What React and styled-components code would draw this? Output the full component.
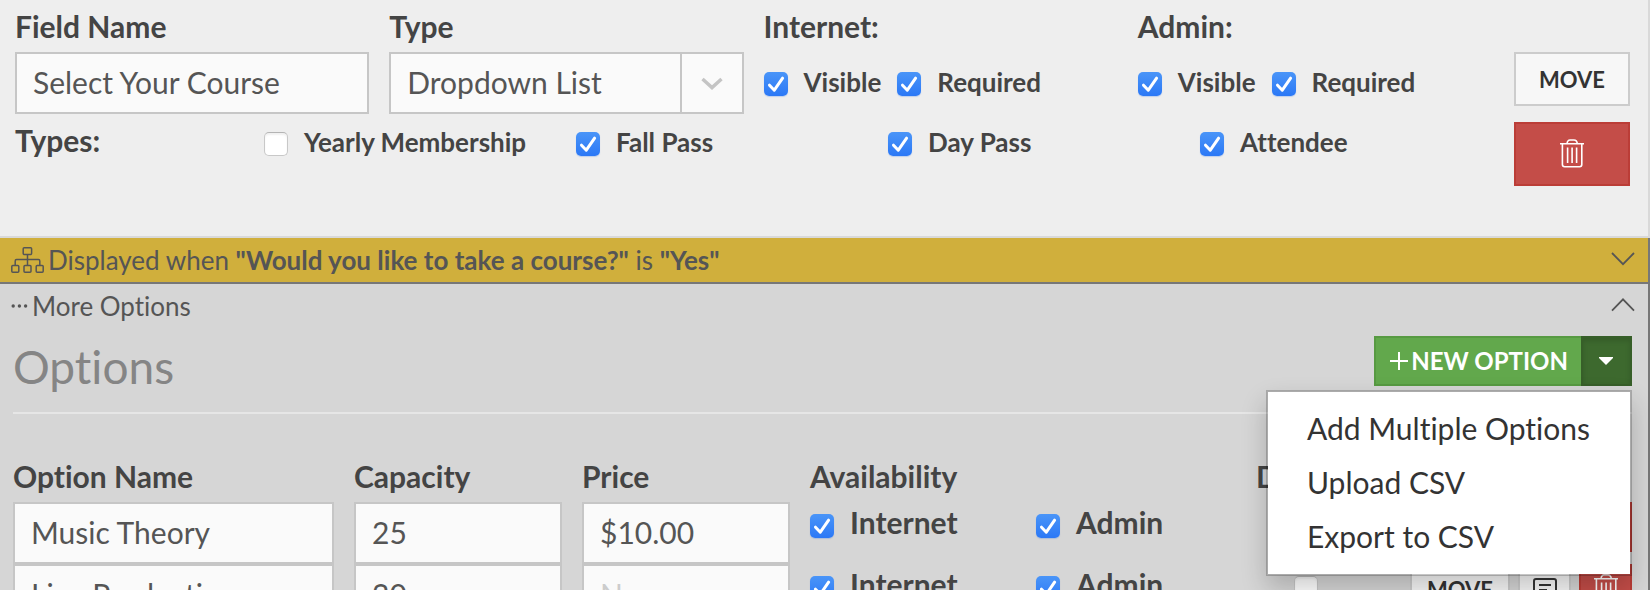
import React from "react";
import styled, { createGlobalStyle, css } from "styled-components";

const GlobalStyle = createGlobalStyle`
  *, *::before, *::after { box-sizing: border-box; }
  body {
    margin: 0;
    overflow: hidden;
    background: #d6d6d6;
    color: #444;
    font-family: Lato, "Liberation Sans", sans-serif;
    font-size: 30px;
    line-height: 36px;
    font-variant-ligatures: none;
  }
  button, input, select { font-family: inherit; font-variant-ligatures: inherit; margin: 0; }
`;

const Page = styled.main`
  height: 100vh;
  overflow: hidden;
`;

const FieldPanel = styled.section`
  display: flex;
  gap: 22px;
  padding: 0 18px 50px 15px;
  background: #eee;
  border-right: 2px solid #d9d9d9;
  border-bottom: 2px solid #d9d9d9;
`;

const FieldSettings = styled.div`
  flex: 1;
  min-width: 0;
`;

const SettingsGrid = styled.div`
  display: grid;
  grid-template-columns: repeat(4, 1fr);
  gap: 20px;
`;

const headingText = css`
  display: block;
  padding: 8px 0;
  font-size: 30px;
  font-weight: 700;
  line-height: 36px;
  text-align: left;
`;

const FieldLabel = styled.label`
  ${headingText}
`;

const Group = styled.div`
  min-width: 0;
`;

const GroupTitle = styled.div`
  ${headingText}
`;

const controlBox = css`
  display: block;
  width: 100%;
  height: 62px;
  border: 2px solid #c6c6c6;
  border-radius: 0;
  background: #fafafa;
  color: #555;
  font-size: 30px;
  line-height: 36px;
  outline: none;
`;

const TextInput = styled.input`
  ${controlBox}
  padding: 0 16px 2px;
  &::placeholder { color: #ccc; opacity: 1; }
`;

const SelectWrap = styled.div`
  position: relative;
`;

const Select = styled.select`
  ${controlBox}
  appearance: none;
  padding: 0 64px 2px 16px;
`;

const SelectArrow = styled.span`
  position: absolute;
  inset: 2px 2px 2px auto;
  width: 62px;
  display: flex;
  align-items: center;
  justify-content: center;
  border-left: 2px solid #c6c6c6;
  color: #c4c4c4;
  pointer-events: none;
`;

const CheckRow = styled.div`
  display: flex;
  gap: 16px;
  padding-top: 14px;
`;

const CheckLabel = styled.label`
  display: flex;
  align-items: flex-start;
  gap: 16px;
  font-size: ${(p) => (p.$large ? "30px" : "26px")};
  line-height: ${(p) => (p.$large ? "36px" : "32px")};
  font-weight: 700;
  white-space: nowrap;
  --box-top: ${(p) => (p.$large ? "10px" : "6px")};
`;

const Box = styled.span`
  display: grid;
  flex: none;
  width: 24px;
  height: 24px;
  margin-top: var(--box-top, 0);
  > * { grid-area: 1 / 1; }
  svg { display: none; pointer-events: none; }
  input:checked + svg { display: block; }
`;

const BoxInput = styled.input`
  appearance: none;
  width: 24px;
  height: 24px;
  border: 1px solid #c8c8c8;
  border-top-color: #b4b4b4;
  border-radius: 5px;
  background: #fff;
  box-shadow: inset 0 2px 2px rgba(0, 0, 0, 0.06);
  &:checked {
    border: 0;
    background: linear-gradient(#4a95f8, #2b78f6);
    box-shadow: 0 1px 1px rgba(40, 110, 230, 0.25);
  }
`;

const TypesGrid = styled.div`
  display: grid;
  grid-template-columns: 229px repeat(4, 1fr);
  gap: 20px;
  padding-top: 8px;
`;

const TypesTitle = styled.div`
  font-weight: 700;
`;

const TypeCell = styled.div`
  padding-top: 4px;
`;

const FieldActions = styled.div`
  display: flex;
  flex-direction: column;
  gap: 16px;
  width: 116px;
  padding-top: 52px;
`;

const tones = {
  plain: css`background: #f7f7f7; border-color: #ccc; color: #333; padding-top: 2px;`,
  danger: css`background: #c44d48; border-color: #bb3d37; color: #fff; padding-bottom: 2px;`,
};

const Button = styled.button`
  display: flex;
  align-items: center;
  justify-content: center;
  height: ${(p) => p.$height}px;
  padding: 0;
  border: 2px solid;
  font-size: 22px;
  line-height: 28px;
  font-weight: 700;
  ${(p) => tones[p.$tone || "plain"]}
`;

const Lower = styled.div`
  border-right: 2px solid #777;
`;

const Bar = styled.button`
  display: flex;
  align-items: center;
  width: 100%;
  height: 44px;
  padding: 0 13px 0 11px;
  border: 0;
  background: transparent;
  color: #555;
  font-size: 26px;
  line-height: 32px;
  text-align: left;
  > svg:last-child { margin-bottom: 2px; }
`;

const ConditionBar = styled(Bar)`
  height: 46px;
  border-bottom: 2px solid #777;
  background: #d0af3c;
`;

const BarText = styled.span`
  flex: 1;
  padding-left: 3px;
`;

const OptionsHeader = styled.header`
  display: flex;
  justify-content: space-between;
  align-items: flex-start;
  margin: 0 16px 0 13px;
  padding: 8px 0 17px;
  border-bottom: 2px solid #e6e6e6;
`;

const Title = styled.h2`
  margin: 0;
  padding-top: 3px;
  color: #858585;
  font-size: 46px;
  font-weight: 400;
  line-height: 56px;
`;

const SplitButton = styled.div`
  position: relative;
  display: flex;
`;

const NewOption = styled.button`
  display: flex;
  align-items: center;
  gap: 2px;
  height: 50px;
  padding: 0 13px;
  border: 2px solid #579a42;
  border-right: 0;
  background: #62a84c;
  color: #fff;
  font-size: 24px;
  font-weight: 700;
  line-height: 30px;
  white-space: nowrap;
`;

const Toggle = styled.button`
  display: flex;
  align-items: center;
  justify-content: center;
  width: 51px;
  height: 50px;
  padding: 0 2px 0 0;
  border: 2px solid #375f29;
  background: #3d692e;
  box-shadow: inset 0 3px 5px rgba(0, 0, 0, 0.125);
  color: #fff;
`;

const Menu = styled.ul`
  position: absolute;
  z-index: 2;
  top: 54px;
  right: 0;
  width: 366px;
  margin: 0;
  padding: 10px 0;
  border: 2px solid rgba(0, 0, 0, 0.2);
  background: #fff;
  background-clip: padding-box;
  box-shadow: 0 12px 24px rgba(0, 0, 0, 0.2);
  list-style: none;
`;

const MenuLink = styled.a`
  display: block;
  padding: 8px 39px 10px;
  color: #333;
  text-decoration: none;
  white-space: nowrap;
`;

const OptionsTable = styled.table`
  display: block;
  padding: 36px 16px 0 13px;
  thead, tbody { display: block; }
  th, td { display: block; min-width: 0; padding: 0; }
`;

const OptionRow = styled.tr`
  display: grid;
  grid-template-columns: 321fr 208fr 208fr 426fr 376fr;
  column-gap: 20px;
`;

const HeadCell = styled.th`
  && { ${headingText} }
`;

const Availability = styled.div`
  display: grid;
  grid-template-columns: 226px 1fr;
  padding-top: 2px;
`;

const RowEnd = styled.div`
  display: flex;
  justify-content: space-between;
  padding-left: 38px;
`;

const DefaultBox = styled.div`
  padding-top: 12px;
`;

const RowActions = styled.div`
  display: grid;
  grid-template-columns: 100px 53px 53px;
  gap: 8px;
`;

function Check({ checked }) {
  return (
    <>
      <BoxInput type="checkbox" defaultChecked={checked} />
      <svg width="24" height="24" viewBox="0 0 24 24" fill="none" stroke="#fff" strokeWidth="3" strokeLinecap="round" strokeLinejoin="round">
        <path d="M5.5 13.2 10.3 18.2 18.6 6.2" />
      </svg>
    </>
  );
}

function Checkbox({ label, checked = true, large }) {
  return (
    <CheckLabel $large={large}>
      <Box><Check checked={checked} /></Box>
      {label}
    </CheckLabel>
  );
}

function TrashIcon() {
  return (
    <svg width="26" height="30" viewBox="0 0 26 30" fill="none" stroke="currentColor" strokeWidth="1.6" aria-hidden="true">
      <path d="M1 5.8H25M3.4 5.8V26.6Q3.4 28.8 5.6 28.8H20.6Q22.8 28.8 22.8 26.6V5.8M8 5.8Q8.4 2 11 2H15Q17.8 2 18.4 5.8M8.6 9.5V25M13.1 9.5V25M17.6 9.5V25" />
    </svg>
  );
}

function NoteIcon() {
  return (
    <svg width="26" height="26" viewBox="0 0 26 26" fill="none" stroke="currentColor" strokeWidth="2" aria-hidden="true">
      <path d="M4 2H22Q24 2 24 4V18Q24 20 22 20H15L11 24V20H4Q2 20 2 18V4Q2 2 4 2ZM7 8H19M7 13H15" />
    </svg>
  );
}

function TreeIcon() {
  return (
    <svg width="34" height="26" viewBox="0 0 34 26" fill="none" stroke="currentColor" strokeWidth="1.5" aria-hidden="true">
      <rect x="12.2" y="0.8" width="8.4" height="6.8" rx="1" />
      <rect x="0.8" y="18.4" width="7" height="6.8" rx="1" />
      <rect x="13" y="18.4" width="7" height="6.8" rx="1" />
      <rect x="25.2" y="18.4" width="7" height="6.8" rx="1" />
      <path d="M16.5 7.6V18.4M4.2 18.4V14Q4.2 12.6 5.6 12.6H27.4Q28.8 12.6 28.8 14V18.4" />
    </svg>
  );
}

function DotsIcon() {
  return (
    <svg width="18" height="6" viewBox="0 0 18 6" fill="currentColor" aria-hidden="true">
      <circle cx="2.2" cy="3" r="1.7" />
      <circle cx="8.4" cy="3" r="1.7" />
      <circle cx="14.6" cy="3" r="1.7" />
    </svg>
  );
}

function Chevron({ up }) {
  return (
    <svg width="24" height="14" viewBox="0 0 24 14" fill="none" stroke="currentColor" strokeWidth="1.8" aria-hidden="true">
      <path d={up ? "M1 12.6 12 1.4 23 12.6" : "M1 1 12 12.2 23 1"} />
    </svg>
  );
}

const options = [
  { name: "Music Theory", capacity: "25", price: "$10.00" },
  { name: "Live Production", capacity: "20", price: "" },
];

export default function App() {
  return (
    <Page>
      <GlobalStyle />
      <FieldPanel>
        <FieldSettings>
          <SettingsGrid>
            <Group>
              <FieldLabel htmlFor="field-name">Field Name</FieldLabel>
              <TextInput id="field-name" defaultValue="Select Your Course" />
            </Group>
            <Group>
              <FieldLabel htmlFor="field-type">Type</FieldLabel>
              <SelectWrap>
                <Select id="field-type" defaultValue="Dropdown List">
                  <option>Dropdown List</option>
                </Select>
                <SelectArrow>
                  <svg width="22" height="14" viewBox="0 0 22 14" fill="none" stroke="currentColor" strokeWidth="3.4">
                    <path d="M1.5 3 11 11.6 20.5 3" />
                  </svg>
                </SelectArrow>
              </SelectWrap>
            </Group>
            {["Internet:", "Admin:"].map((title) => (
              <Group key={title} role="group" aria-label={title}>
                <GroupTitle>{title}</GroupTitle>
                <CheckRow>
                  <Checkbox label="Visible" />
                  <Checkbox label="Required" />
                </CheckRow>
              </Group>
            ))}
          </SettingsGrid>
          <TypesGrid>
            <TypesTitle>Types:</TypesTitle>
            <TypeCell><Checkbox label="Yearly Membership" checked={false} /></TypeCell>
            <TypeCell><Checkbox label="Fall Pass" /></TypeCell>
            <TypeCell><Checkbox label="Day Pass" /></TypeCell>
            <TypeCell><Checkbox label="Attendee" /></TypeCell>
          </TypesGrid>
        </FieldSettings>
        <FieldActions>
          <Button type="button" $height={54}>MOVE</Button>
          <Button type="button" $height={64} $tone="danger" aria-label="Delete field"><TrashIcon /></Button>
        </FieldActions>
      </FieldPanel>

      <Lower>
        <ConditionBar type="button">
          <TreeIcon />
          <BarText>
            Displayed when <b>"Would you like to take a course?"</b> is <b>"Yes"</b>
          </BarText>
          <Chevron />
        </ConditionBar>
        <Bar type="button">
          <DotsIcon />
          <BarText>More Options</BarText>
          <Chevron up />
        </Bar>

        <OptionsHeader>
          <Title>Options</Title>
          <SplitButton>
            <NewOption type="button">
              <svg width="20" height="20" viewBox="0 0 20 20" stroke="currentColor" strokeWidth="2" aria-hidden="true">
                <path d="M1 10H19M10 1V19" />
              </svg>
              NEW OPTION
            </NewOption>
            <Toggle type="button" aria-label="More ways to add options" aria-expanded="true">
              <svg width="14" height="8" viewBox="0 0 14 8" fill="currentColor"><path d="M0 0H14V1L7 8 0 1Z" /></svg>
            </Toggle>
            <Menu>
              <li><MenuLink href="#add">Add Multiple Options</MenuLink></li>
              <li><MenuLink href="#upload">Upload CSV</MenuLink></li>
              <li><MenuLink href="#export">Export to CSV</MenuLink></li>
            </Menu>
          </SplitButton>
        </OptionsHeader>

        <OptionsTable>
          <thead>
            <OptionRow>
              <HeadCell>Option Name</HeadCell>
              <HeadCell>Capacity</HeadCell>
              <HeadCell>Price</HeadCell>
              <HeadCell>Availability</HeadCell>
              <HeadCell>Default</HeadCell>
            </OptionRow>
          </thead>
          <tbody>
            {options.map((o) => (
              <OptionRow key={o.name}>
                <td><TextInput aria-label="Option Name" defaultValue={o.name} /></td>
                <td><TextInput aria-label="Capacity" defaultValue={o.capacity} /></td>
                <td><TextInput aria-label="Price" defaultValue={o.price} placeholder="None" /></td>
                <td>
                  <Availability>
                    <Checkbox large label="Internet" />
                    <Checkbox large label="Admin" />
                  </Availability>
                </td>
                <td>
                  <RowEnd>
                    <DefaultBox>
                      <Box as="label" aria-label="Default"><Check checked={false} /></Box>
                    </DefaultBox>
                    <RowActions>
                      <Button type="button" $height={50}>MOVE</Button>
                      <Button type="button" $height={50} aria-label="Edit note"><NoteIcon /></Button>
                      <Button type="button" $height={50} $tone="danger" aria-label="Delete option"><TrashIcon /></Button>
                    </RowActions>
                  </RowEnd>
                </td>
              </OptionRow>
            ))}
          </tbody>
        </OptionsTable>
      </Lower>
    </Page>
  );
}
